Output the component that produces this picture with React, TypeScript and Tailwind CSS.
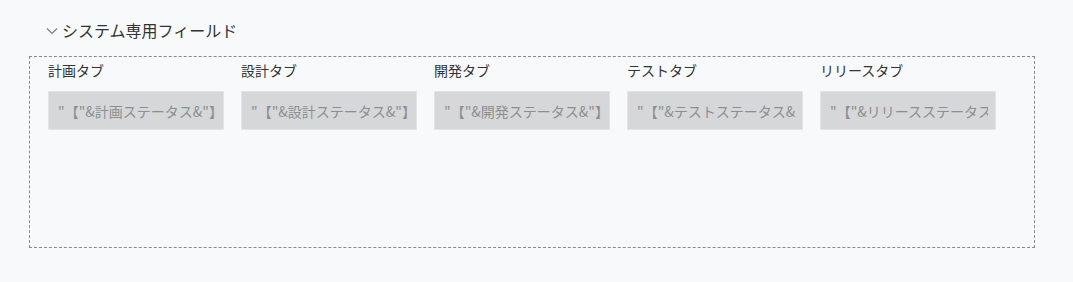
const tabs = [
  { label: '計画タブ', value: '"【"&計画ステータス&"】' },
  { label: '設計タブ', value: '"【"&設計ステータス&"】' },
  { label: '開発タブ', value: '"【"&開発ステータス&"】' },
  { label: 'テストタブ', value: '"【"&テストステータス&"】' },
  { label: 'リリースタブ', value: '"【"&リリースステータス&"】' },
];

export default function App() {
  return (
    <div
      className="w-[1073px] h-[282px] bg-[#f8f9fa] pt-[20px] pl-[29px] pr-[38px] overflow-hidden"
      style={{ fontFamily: '"Noto Sans CJK JP", "Noto Sans", sans-serif' }}
    >
      {/* Section header */}
      <div className="flex items-center h-[20px] pl-[17px] gap-[4px] text-[16px] leading-[20px] text-[#333]">
        <svg width="12" height="8" viewBox="0 0 12 8" fill="none" className="mt-[1px]">
          <path d="M1 1.5 L6 6.5 L11 1.5" stroke="#7d8184" strokeWidth="1.2" />
        </svg>
        <span>システム専用フィールド</span>
      </div>

      {/* Field container */}
      <div className="mt-[16px] h-[192px] border border-dashed border-[#8a8a8a] px-[18px] pt-[3px]">
        <div className="flex gap-[17px]">
          {tabs.map((t) => (
            <div key={t.label} className="w-[176px] flex flex-col">
              <div className="h-[20px] text-[14px] leading-[20px] text-[#333]">{t.label}</div>
              <input
                readOnly
                value={t.value}
                className="mt-[11px] w-[176px] h-[39px] bg-[#d5d7d8] border border-[#e2e4e5] pl-[9px] pr-[7px] text-[14px] text-[#8c8f91] outline-none"
              />
            </div>
          ))}
        </div>
      </div>
    </div>
  );
}
